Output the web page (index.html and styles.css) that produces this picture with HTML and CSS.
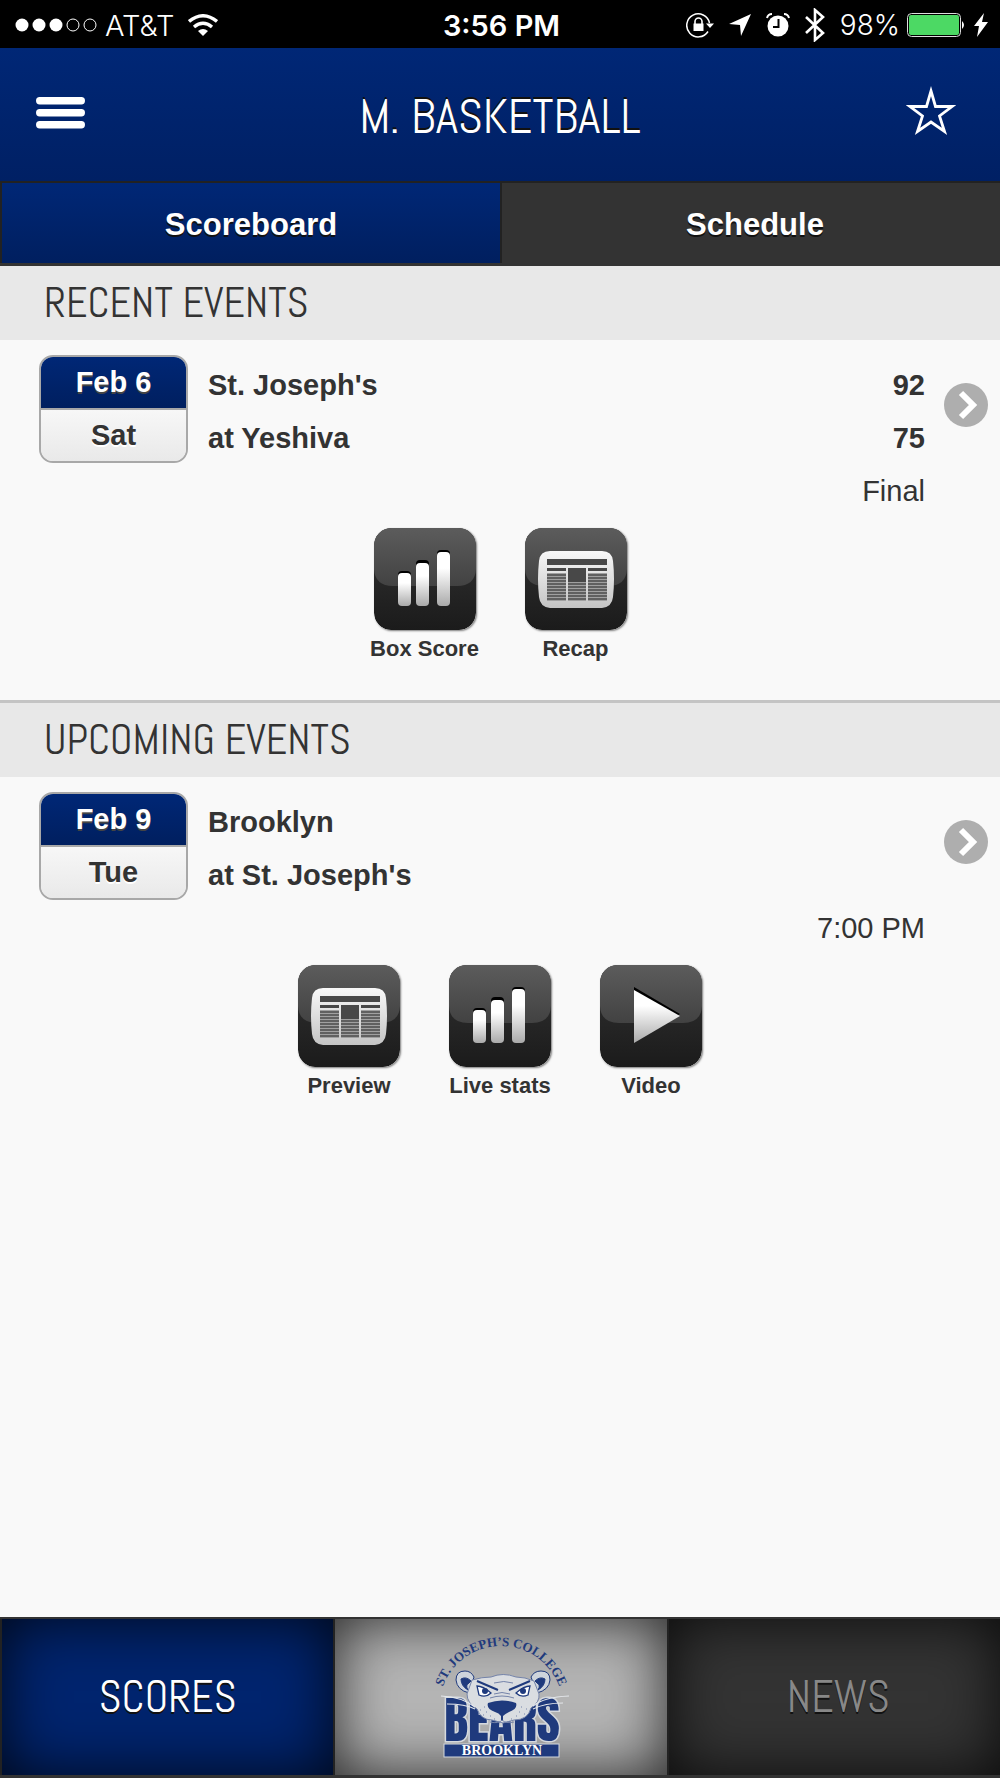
FILE: index.html
```
<!DOCTYPE html>
<html lang="en">
<head>
  <meta charset="UTF-8">
  <meta name="viewport" content="width=device-width, initial-scale=1.0">
  <title>M. Basketball</title>
  <link rel="stylesheet" href="styles.css">
</head>
<body>
  <!-- shared icons -->
  <svg class="defs" width="0" height="0" aria-hidden="true">
    <defs>
      <linearGradient id="tile" x1="0" y1="0" x2="0" y2="1">
        <stop offset="0" stop-color="#333"/>
        <stop offset="1" stop-color="#1b1b1b"/>
      </linearGradient>
      <linearGradient id="gloss" x1="0" y1="0" x2="0" y2="1">
        <stop offset="0" stop-color="#5c5c5c"/>
        <stop offset="1" stop-color="#424242"/>
      </linearGradient>
      <linearGradient id="silver" x1="0" y1="0" x2="0" y2="1">
        <stop offset="0.3" stop-color="#fff"/>
        <stop offset="1" stop-color="#aaa"/>
      </linearGradient>
      <linearGradient id="paper" x1="0" y1="0" x2="0" y2="1">
        <stop offset="0" stop-color="#f8f8f8"/>
        <stop offset="1" stop-color="#c4c4c4"/>
      </linearGradient>
      <symbol id="icon-tile" viewBox="0 0 102 102">
        <rect width="102" height="102" rx="17" fill="url(#tile)"/>
        <path d="M17 0h68a17 17 0 0 1 17 17v24q-1 17-19 17H19Q1 58 0 41V17A17 17 0 0 1 17 0z" fill="url(#gloss)"/>
      </symbol>
      <symbol id="icon-bars" viewBox="0 0 102 102">
        <use href="#icon-tile"/>
        <g fill="#000">
          <rect x="24" y="43" width="13" height="20" rx="4"/>
          <rect x="42" y="32" width="13" height="20" rx="4"/>
          <rect x="63" y="22" width="13" height="20" rx="4"/>
        </g>
        <g fill="url(#silver)">
          <rect x="24" y="45" width="13" height="33" rx="4"/>
          <rect x="42" y="35" width="13" height="43" rx="4"/>
          <rect x="63" y="24" width="13" height="54" rx="4"/>
        </g>
      </symbol>
      <symbol id="icon-paper" viewBox="0 0 102 102">
        <use href="#icon-tile"/>
        <path d="M25 23h52q10 0 11 10 2 18 0 36-1 10-11 11H25q-10-1-11-11-2-18 0-36 1-10 11-10z" fill="url(#paper)"/>
        <path d="M22 31h60v6H22zM22 40h19v3H22zM63 40h19v3H63zM43 40h18v14H43z" fill="#484848"/>
        <path d="M22 45h19v28H22zM63 45h19v28H63zM43 54h18v19H43z" fill="#a0a0a0"/>
        <path d="M22 47h19M22 50h19M22 53h19M22 56h19M22 59h19M22 62h19M22 65h19M22 68h19M22 71h19M63 47h19M63 50h19M63 53h19M63 56h19M63 59h19M63 62h19M63 65h19M63 68h19M63 71h19M43 56h18M43 59h18M43 62h18M43 65h18M43 68h18M43 71h18" stroke="#606060" stroke-width="1.800"/>
      </symbol>
      <symbol id="icon-play" viewBox="0 0 102 102">
        <use href="#icon-tile"/>
        <path d="M34 22l46 27-46 27z" fill="#000"/>
        <path d="M34 25l46 26-46 27z" fill="url(#silver)"/>
      </symbol>
      <symbol id="icon-next" viewBox="0 0 44 44">
        <circle cx="22" cy="22" r="22" fill="#aeaeae"/>
        <path d="M17 10l12 12-12 12" fill="none" stroke="#fff" stroke-width="6"/>
      </symbol>
    </defs>
  </svg>

  <div class="status-bar">
    <div class="status-left">
      <svg width="82" height="14" viewBox="0 0 82 14">
        <g fill="#fff"><circle cx="7" cy="7" r="6.5"/><circle cx="24" cy="7" r="6.5"/><circle cx="41" cy="7" r="6.5"/></g>
        <g fill="none" stroke="#fff"><circle cx="58" cy="7" r="6"/><circle cx="75" cy="7" r="6"/></g>
      </svg>
      <span class="carrier">AT&amp;T</span>
      <svg width="30" height="22" viewBox="0 0 30 22">
        <g fill="none" stroke="#fff" stroke-width="3.4"><path d="M1 7.500Q15-4 29 7.500"/><path d="M6 13Q15 5.500 24 13"/></g>
        <path d="M10 17q5-4 10 0l-5 5z" fill="#fff"/>
      </svg>
    </div>
    <div class="status-time">3:56 PM</div>
    <div class="status-right">
      <svg width="28" height="26" viewBox="0 0 28 26">
        <path d="M22 19.500A11.500 11.500 0 1 1 23.500 11" fill="none" stroke="#fff" stroke-width="1.500"/>
        <path d="M20 11.500h8l-4 4.500z" fill="#fff"/>
        <path d="M7.500 11.500h10V19h-10z" fill="#fff"/>
        <path d="M9 12V9.500a3.500 3.500 0 0 1 7 0V12" fill="none" stroke="#fff" stroke-width="1.600"/>
      </svg>
      <svg width="22" height="22" viewBox="0 0 22 22"><path d="M22 0L12 22l-1-11L0 10z" fill="#fff"/></svg>
      <svg width="24" height="24" viewBox="0 0 24 24">
        <circle cx="12" cy="13" r="10.500" fill="#fff"/>
        <path d="M1 5Q2 1 6 1M23 5Q22 1 18 1" fill="none" stroke="#fff" stroke-width="2"/>
        <path d="M12.500 6v8H7" fill="none" stroke="#000" stroke-width="2"/>
      </svg>
      <svg width="20" height="34" viewBox="0 0 20 34"><path d="M1 9l17 16-8 7V2l8 7L1 25" fill="none" stroke="#fff" stroke-width="2.600"/></svg>
      <span class="percent">98%</span>
      <svg width="60" height="24" viewBox="0 0 60 24">
        <rect x="0.500" y="0.500" width="53" height="23" rx="4" fill="none" stroke="#ddd"/>
        <rect x="2" y="2" width="50" height="20" rx="2" fill="#4cd964"/>
        <path d="M55 8q4 4 0 8z" fill="#fff"/>
      </svg>
      <svg width="14" height="24" viewBox="0 0 14 24"><path d="M10 0L0 13h5L3 24 14 9H8z" fill="#fff"/></svg>
    </div>
  </div>

  <header class="header">
    <button class="icon-button" aria-label="Menu">
      <svg width="49" height="32" viewBox="0 0 49 32" fill="#fff">
        <rect width="49" height="7.500" rx="3.700"/><rect y="12" width="49" height="7.500" rx="3.700"/><rect y="24" width="49" height="7.500" rx="3.700"/>
      </svg>
    </button>
    <h1>M. BASKETBALL</h1>
    <button class="icon-button" aria-label="Favorite">
      <svg width="50" height="54" viewBox="0 0 50 54"><path d="M25 5l4.500 15.500H46L33.500 30 38.500 45.500 25 36 11.500 45.500 16.500 30 4 20.500h16.500z" fill="none" stroke="#fff" stroke-width="2.800"/></svg>
    </button>
  </header>

  <nav class="tabs">
    <a class="tab active" href="#scoreboard">Scoreboard</a>
    <a class="tab" href="#schedule">Schedule</a>
  </nav>

  <main id="scoreboard">
    <section class="events">
      <h2>RECENT EVENTS</h2>
      <div class="event">
        <a class="matchup" href="#game">
          <div class="date"><div class="day">Feb 6</div><div class="weekday">Sat</div></div>
          <div class="teams">
            <div class="team"><span>St. Joseph's</span><span>92</span></div>
            <div class="team"><span>at Yeshiva</span><span>75</span></div>
            <div class="state">Final</div>
          </div>
          <svg class="next" width="44" height="44"><use href="#icon-next"/></svg>
        </a>
        <div class="actions">
          <a class="action" href="#boxscore"><svg width="102" height="102"><use href="#icon-bars"/></svg>Box Score</a>
          <a class="action" href="#recap"><svg width="102" height="102"><use href="#icon-paper"/></svg>Recap</a>
        </div>
      </div>
    </section>

    <section class="events">
      <h2>UPCOMING EVENTS</h2>
      <div class="event">
        <a class="matchup" href="#game">
          <div class="date"><div class="day">Feb 9</div><div class="weekday">Tue</div></div>
          <div class="teams">
            <div class="team"><span>Brooklyn</span></div>
            <div class="team"><span>at St. Joseph's</span></div>
            <div class="state">7:00 PM</div>
          </div>
          <svg class="next" width="44" height="44"><use href="#icon-next"/></svg>
        </a>
        <div class="actions">
          <a class="action" href="#preview"><svg width="102" height="102"><use href="#icon-paper"/></svg>Preview</a>
          <a class="action" href="#live"><svg width="102" height="102"><use href="#icon-bars"/></svg>Live stats</a>
          <a class="action" href="#video"><svg width="102" height="102"><use href="#icon-play"/></svg>Video</a>
        </div>
      </div>
    </section>
  </main>

  <nav class="bottom-nav">
    <a class="bottom-link active" href="#scores">SCORES</a>
    <a class="bottom-link home" href="#home" aria-label="Home">
      <svg class="logo" width="134" height="126" viewBox="24 24 134 126">
        <path id="arc" d="M29 98a62 62 0 0 1 124 0" fill="none"/>
        <text class="logo-arc" text-anchor="middle"><textPath href="#arc" startOffset="50%">ST. JOSEPH’S COLLEGE</textPath></text>
        <text class="logo-bears" x="92" y="131" text-anchor="middle">BEARS</text>
        <g stroke="#1f3a7d" stroke-linejoin="round">
          <path d="M59 83q-12-3-13-13 0-9 9-9 6 0 9 6zM127 83q12-3 13-13 0-9-9-9-7 0-10 6z" fill="#ced4dc"/>
          <path d="M58 80q-7-4-7-11 5-3 10 2l-2 2q-4 2-1 7zM128 80q7-4 7-11-5-3-10 2l2 2q4 2 1 7z" fill="#1f3a7d"/>
          <path d="M62 70q10-3 19-3 12-5 25 0 9 0 18 4l5 13q1 8-8 14-3 12-17 12l-11 3-11-3q-11 0-15-11-10-6-10-15z" fill="#dadde1" stroke="#7483a9"/>
        </g>
        <path d="M67 71l21 9M120 71l-21 9" fill="none" stroke="#1f3a7d" stroke-width="2"/>
        <path d="M67 76q6 0 14 7-5 5-12 2zM120 76q-6 0-14 7 5 5 12 2z" fill="#fff" stroke="#1f3a7d" stroke-width="1.300"/>
        <circle cx="75" cy="81" r="3" fill="#1f3a7d"/><circle cx="113" cy="81" r="3" fill="#1f3a7d"/>
        <path d="M78 93q14-5 28 0 2 6-7 9-4 2-6 4v5h-2v-5q-2-3-6-4-9-3-7-9z" fill="#1f3a7d"/>
        <path d="M80 88q12-4 24 0M84 84q8-3 16 0M84 73q10-3 19 0M80 112q9 2 12-2 4 4 12 2" fill="none" stroke="#7483a9"/>
        <path d="M74 97h1M70 100h1M76 102h1M73 105h1M80 106h1M84 109h1M111 97h1M116 99h1M109 102h1M114 104h1M106 106h1M101 109h1" stroke="#7483a9"/>
        <path d="M31 86q21 1 34 11M37 94q18 0 28 5M159 86q-25 1-36 10M153 93q-18 0-30 6" fill="none" stroke="#e5e8ec" stroke-width="1.200"/>
        <rect x="34" y="134" width="115" height="13" fill="#1f3a7d" stroke="#d5d9de"/>
        <text class="logo-city" x="92" y="145" text-anchor="middle">BROOKLYN</text>
      </svg>
    </a>
    <a class="bottom-link" href="#news">NEWS</a>
  </nav>
</body>
</html>
```
FILE: styles.css
```
* {
  box-sizing: border-box;
}
body {
  margin: 0;
  min-height: 100vh;
  display: flex;
  flex-direction: column;
  background: #f9f9f9;
  color: #333;
  font-family: "Liberation Sans", Arial, sans-serif;
  font-size: 29px;
}
a {
  color: inherit;
  text-decoration: none;
}
svg {
  flex: none;
}
.defs {
  position: absolute;
}

/* Status bar */
.status-bar {
  display: grid;
  grid-template-columns: 1fr auto 1fr;
  align-items: center;
  height: 48px;
  padding: 2px 12px 0 15px;
  background: #000;
  color: #fff;
  font-family: Inter, sans-serif;
  font-size: 29px;
}
.status-left,
.status-right {
  display: flex;
  align-items: center;
}
.status-left {
  gap: 8px;
}
.carrier {
  margin-right: 6px;
  font-weight: 300;
}
.status-time {
  font-weight: 600;
}
.status-right {
  justify-content: flex-end;
  gap: 15px;
}
.percent {
  margin-right: -8px;
  font-size: 28px;
  font-weight: 300;
}
.status-right svg:last-child {
  margin-left: -8px;
}

/* Header */
.header {
  display: grid;
  grid-template-columns: 1fr auto 1fr;
  align-items: center;
  height: 133px;
  padding: 0 44px 4px 36px;
  background: linear-gradient(#002776, #002064);
  color: #fff;
}
.header h1 {
  margin: 0;
  padding: 8px 0 0 8px;
  font-family: Abel, "Liberation Sans Narrow", Roboto, sans-serif;
  font-size: 48px;
  font-weight: 300;
  text-shadow: 0 -2px 0 #111;
}
.icon-button {
  display: flex;
  padding: 0;
  border: none;
  background: none;
  cursor: pointer;
}
.icon-button:last-child {
  justify-self: end;
}

/* Tabs */
.tabs {
  display: flex;
  border-top: 2px solid #222;
  border-bottom: 3px solid #333;
  background: #333;
}
.tab {
  flex: 1;
  height: 80px;
  padding-top: 2px;
  border-left: 2px solid #222;
  color: #fff;
  font-size: 31px;
  font-weight: bold;
  line-height: 80px;
  text-align: center;
  text-shadow: 0 2px 0 #111;
}
.tab.active {
  background: linear-gradient(#002776, #001f5f);
}

/* Events */
.events + .events {
  border-top: 3px solid #c4c4c4;
}
.events h2 {
  margin: 0;
  padding-left: 44px;
  background: #e8e8e8;
  font-family: Abel, "Liberation Sans Narrow", Roboto, sans-serif;
  font-size: 42px;
  font-weight: 300;
  line-height: 74px;
}
.event {
  padding: 15px 12px 39px 39px;
}
.matchup {
  display: flex;
  align-items: flex-start;
}
.date {
  width: 149px;
  border: 2px solid #a8a8a8;
  border-radius: 14px;
  overflow: hidden;
  font-weight: bold;
  line-height: 51px;
  text-align: center;
}
.day {
  border-bottom: 2px solid #a8a8a8;
  background: linear-gradient(#002776, #001f5f);
  color: #fff;
  text-shadow: 0 2px 0 #444;
}
.weekday {
  background: linear-gradient(#f7f7f7, #e9e9e9);
  text-shadow: 0 2px 0 #fff;
}
.teams {
  flex: 1;
  margin: 4px 19px 0 20px;
  line-height: 53px;
}
.team {
  display: flex;
  justify-content: space-between;
  font-weight: bold;
}
.state {
  text-align: right;
}
.next {
  margin-top: 28px;
}
.actions {
  display: flex;
  justify-content: center;
  margin: 10px 0 0 -27px;
}
.action {
  display: flex;
  flex-direction: column;
  align-items: center;
  gap: 7px;
  width: 151px;
  font-size: 22px;
  font-weight: bold;
  line-height: 24px;
}
.action svg {
  border-radius: 17px;
  box-shadow: 1px 1px 2px rgba(0, 0, 0, 0.5);
}

/* Bottom navigation */
.bottom-nav {
  display: flex;
  height: 161px;
  margin-top: auto;
  border-top: 2px solid #333;
  border-bottom: 3px solid #333;
}
.bottom-link {
  flex: 1 1 0;
  display: flex;
  align-items: center;
  justify-content: center;
  border-left: 2px solid #222;
  background: #333;
  box-shadow: inset 0 0 60px rgba(0, 0, 0, 0.8);
  color: #888;
  font-family: Abel, "Liberation Sans Narrow", Roboto, sans-serif;
  font-size: 44px;
  font-weight: 300;
  text-shadow: 0 2px 0 #111;
}
.bottom-link.active {
  background: #00246e;
  color: #fff;
}
.bottom-link.home {
  background: #b4b4b4;
  text-shadow: none;
}
.tab:last-child {
  text-indent: 8px;
}
.bottom-link:last-child {
  text-indent: 8px;
}
.logo {
  overflow: visible;
}
.logo-arc {
  fill: #1f3a7d;
  font: bold 13px "Liberation Serif", serif;
}
.logo-bears {
  fill: #1f3a7d;
  stroke: #d5d9de;
  stroke-width: 3px;
  paint-order: stroke;
  font: 50px Anton, "Liberation Sans Narrow", "Liberation Sans", sans-serif;
}
.logo-city {
  fill: #fff;
  font: bold 14px "Liberation Serif", serif;
}
```
